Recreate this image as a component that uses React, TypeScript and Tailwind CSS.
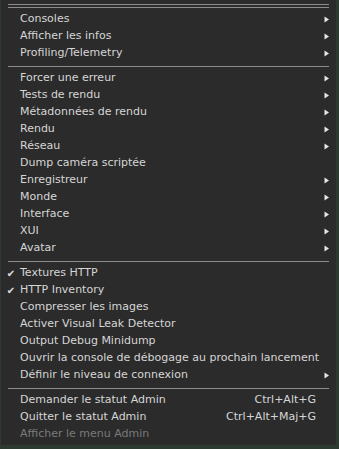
import React from 'react';

type Item =
  | { kind: 'sep' }
  | { kind: 'item'; label: string; sub?: boolean; checked?: boolean; shortcut?: string; disabled?: boolean };

const items: Item[] = [
  { kind: 'item', label: 'Consoles', sub: true },
  { kind: 'item', label: 'Afficher les infos', sub: true },
  { kind: 'item', label: 'Profiling/Telemetry', sub: true },
  { kind: 'sep' },
  { kind: 'item', label: 'Forcer une erreur', sub: true },
  { kind: 'item', label: 'Tests de rendu', sub: true },
  { kind: 'item', label: 'Métadonnées de rendu', sub: true },
  { kind: 'item', label: 'Rendu', sub: true },
  { kind: 'item', label: 'Réseau', sub: true },
  { kind: 'item', label: 'Dump caméra scriptée' },
  { kind: 'item', label: 'Enregistreur', sub: true },
  { kind: 'item', label: 'Monde', sub: true },
  { kind: 'item', label: 'Interface', sub: true },
  { kind: 'item', label: 'XUI', sub: true },
  { kind: 'item', label: 'Avatar', sub: true },
  { kind: 'sep' },
  { kind: 'item', label: 'Textures HTTP', checked: true },
  { kind: 'item', label: 'HTTP Inventory', checked: true },
  { kind: 'item', label: 'Compresser les images' },
  { kind: 'item', label: 'Activer Visual Leak Detector' },
  { kind: 'item', label: 'Output Debug Minidump' },
  { kind: 'item', label: 'Ouvrir la console de débogage au prochain lancement' },
  { kind: 'item', label: 'Définir le niveau de connexion', sub: true },
  { kind: 'sep' },
  { kind: 'item', label: 'Demander le statut Admin', shortcut: 'Ctrl+Alt+G' },
  { kind: 'item', label: 'Quitter le statut Admin', shortcut: 'Ctrl+Alt+Maj+G' },
  { kind: 'item', label: 'Afficher le menu Admin', disabled: true },
];

function Arrow() {
  return (
    <svg width="6" height="7" viewBox="0 0 6 7" className="shrink-0">
      <path d="M0.5 0.5 L5 3.5 L0.5 6.5 Z" fill="#e6e6e6" />
    </svg>
  );
}

export default function App() {
  return (
    <div className="w-[339px] h-[449px] bg-[#2c3a30] overflow-hidden">
      <div
        className="ml-[1px] w-[335px] h-[445px] bg-[#2b2b2b] text-[11px] text-[#d6d6d6] pt-[4px]"
        style={{ fontFamily: '"DejaVu Sans", sans-serif' }}
      >
        <div className="mx-[7px] h-[1px] bg-[#8c8c8c]" />
        <div className="mx-[7px] mt-[2px] h-[1px] bg-[#8c8c8c]" />
        <div className="h-[3px]" />
        {items.map((it, i) =>
          it.kind === 'sep' ? (
            <div key={i} className="h-[8px] flex items-center">
              <div className="mx-[7px] flex-1 h-[1px] bg-[#8c8c8c]" />
            </div>
          ) : (
            <div key={i} className="h-[17px] flex items-center">
              <div className="w-[19px] shrink-0 flex justify-center pl-[1px]">
                {it.checked && <span className="text-[10px] text-[#e0e0e0] leading-none">✔</span>}
              </div>
              <span className={`flex-1 whitespace-nowrap ${it.disabled ? 'text-[#7a7a7a]' : ''}`}>{it.label}</span>
              {it.shortcut && <span className="mr-[20px] whitespace-nowrap">{it.shortcut}</span>}
              {it.sub && (
                <div className="mr-[6px]">
                  <Arrow />
                </div>
              )}
            </div>
          )
        )}
      </div>
    </div>
  );
}
